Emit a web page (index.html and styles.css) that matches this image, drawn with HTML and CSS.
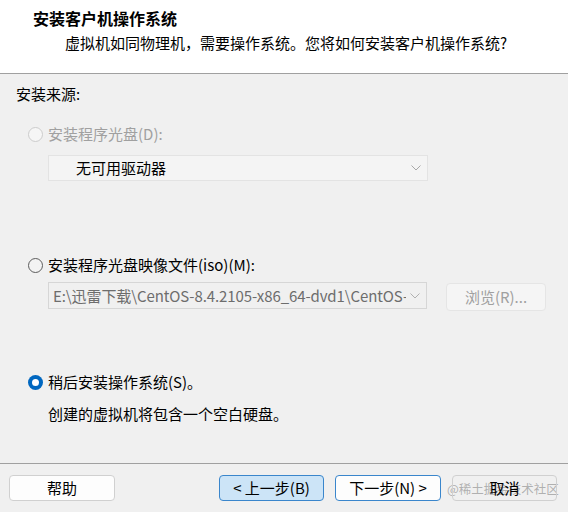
FILE: index.html
```html
<!DOCTYPE html>
<html lang="zh-CN">
<head>
<meta charset="utf-8">
<title>安装客户机操作系统</title>
<link rel="stylesheet" href="styles.css">
</head>
<body>
<div class="window">
  <header class="header">
    <div class="title">安装客户机操作系统</div>
    <div class="subtitle">虚拟机如同物理机，需要操作系统。您将如何安装客户机操作系统?</div>
  </header>
  <main class="main">
    <div class="source-label">安装来源:</div>

    <div class="radio-row row-1 disabled">
      <span class="radio radio-disabled"></span>
      <span class="radio-label">安装程序光盘(D):</span>
    </div>
    <div class="combo combo-1">
      <span class="combo-text">无可用驱动器</span>
      <svg class="chev" width="10" height="6" viewBox="0 0 10 6"><polyline points="0.5,0.5 5,5 9.5,0.5" fill="none" stroke="#a8a8a8" stroke-width="1"/></svg>
    </div>

    <div class="radio-row row-2">
      <span class="radio"></span>
      <span class="radio-label">安装程序光盘映像文件(iso)(M):</span>
    </div>
    <div class="iso-row">
      <div class="combo combo-2">
        <span class="combo-text path">E:\迅雷下载\CentOS-8.4.2105-x86_64-dvd1\CentOS-8</span>
        <svg class="chev" width="10" height="6" viewBox="0 0 10 6"><polyline points="0.5,0.5 5,5 9.5,0.5" fill="none" stroke="#b0b0b0" stroke-width="1"/></svg>
      </div>
      <div class="browse">浏览(R)...</div>
    </div>

    <div class="radio-row row-3">
      <span class="radio radio-checked"></span>
      <span class="radio-label">稍后安装操作系统(S)。</span>
    </div>
    <div class="desc">创建的虚拟机将包含一个空白硬盘。</div>
  </main>
  <footer class="footer">
    <div class="btn btn-help">帮助</div>
    <div class="spacer"></div>
    <div class="btn btn-back">&lt; 上一步(B)</div>
    <div class="btn btn-next">下一步(N) &gt;</div>
    <div class="btn btn-cancel">取消</div>
    <div class="watermark">@稀土掘金技术社区</div>
  </footer>
</div>
</body>
</html>
```

FILE: styles.css
```css
* { box-sizing: border-box; }
html, body { margin: 0; padding: 0; }
body {
  width: 568px;
  height: 512px;
  overflow: hidden;
  background: #f0f0f0;
  font-family: "Noto Sans CJK SC", "Noto Sans", sans-serif;
  font-size: 15px;
  color: #1a1a1a;
}
.window {
  width: 568px;
  height: 512px;
  display: flex;
  flex-direction: column;
}
.header {
  height: 74px;
  background: #ffffff;
  border-bottom: 1px solid #a0a0a0;
  padding: 7px 0 0 33px;
  flex: none;
}
.title {
  font-size: 16px;
  font-weight: 700;
  line-height: 22px;
  color: #000;
}
.subtitle {
  margin-top: 3px;
  padding-left: 32px;
  font-size: 15px;
  line-height: 22px;
  color: #000;
}
.main {
  flex: 1;
  padding: 10px 0 0 16px;
}
.source-label {
  line-height: 20px;
  color: #000;
}
.radio-row {
  display: flex;
  align-items: center;
  gap: 5px;
  margin-left: 12px;
  height: 20px;
  line-height: 20px;
  color: #000;
}
.row-1 { margin-top: 20px; }
.row-2 { margin-top: 74px; }
.row-3 { margin-top: 61px; }
.disabled .radio-label { color: #a0a0a0; }
.radio {
  width: 15px;
  height: 15px;
  border-radius: 50%;
  border: 1px solid #5c5c5c;
  background: #f3f3f3;
  flex: none;
  position: relative;
}
.radio-disabled {
  border-color: #cccccc;
  background: #f6f6f6;
}
.radio-checked {
  border: none;
  background: #0067c0;
}
.radio-checked::after {
  content: "";
  position: absolute;
  left: 4px;
  top: 4px;
  width: 7px;
  height: 7px;
  border-radius: 50%;
  background: #ffffff;
}
.combo {
  display: flex;
  align-items: center;
  height: 26px;
  width: 380px;
  margin-left: 32px;
  border: 1px solid #e3e3e3;
  background: #f4f4f4;
  padding: 0 6px 0 27px;
}
.combo-1 { margin-top: 11px; }
.combo-text {
  flex: 1;
  min-width: 0;
  line-height: 20px;
  white-space: nowrap;
  overflow: hidden;
  color: #000;
}
.chev { flex: none; margin-left: 4px; }
.iso-row {
  display: flex;
  align-items: flex-start;
  margin-top: 7px;
  margin-left: 32px;
  gap: 19px;
}
.combo-2 {
  margin-left: 0;
  width: 379px;
  height: 27px;
  background: #f0f0f0;
  border-color: #d6d6d6;
  padding: 0 6px 0 4px;
}
.path { color: #6d6d6d; letter-spacing: -0.1px; }
.browse {
  width: 100px;
  height: 28px;
  margin-top: 1px;
  border: 1px solid #e5e5e5;
  border-radius: 4px;
  background: #f5f5f5;
  color: #a0a0a0;
  display: flex;
  align-items: center;
  justify-content: center;
  line-height: 20px;
}
.desc {
  margin-top: 12px;
  margin-left: 32px;
  line-height: 20px;
  color: #000;
}
.footer {
  flex: none;
  height: 49px;
  border-top: 1px solid #a0a0a0;
  display: flex;
  align-items: flex-start;
  padding: 11px 11px 0 9px;
  gap: 11px;
  position: relative;
  border-bottom-left-radius: 7px;
  border-bottom-right-radius: 7px;
}
.spacer { flex: 1; }
.btn {
  width: 105px;
  height: 26px;
  border: 1px solid #d0d0d0;
  border-radius: 4px;
  background: #fdfdfd;
  display: flex;
  align-items: center;
  justify-content: center;
  line-height: 20px;
  color: #000;
}
.btn-help { width: 106px; }
.btn-back {
  background: #cce4f7;
  border-color: #3a86cc;
}
.btn-next {
  width: 106px;
  border-color: #3a86cc;
  background: #fdfdfd;
}
.btn-cancel {
  position: relative;
  z-index: 1;
  background: transparent;
}
.watermark {
  position: absolute;
  left: 447px;
  top: 15px;
  font-size: 12.5px;
  line-height: 20px;
  color: rgba(120, 120, 120, 0.55);
  white-space: nowrap;
}
```
